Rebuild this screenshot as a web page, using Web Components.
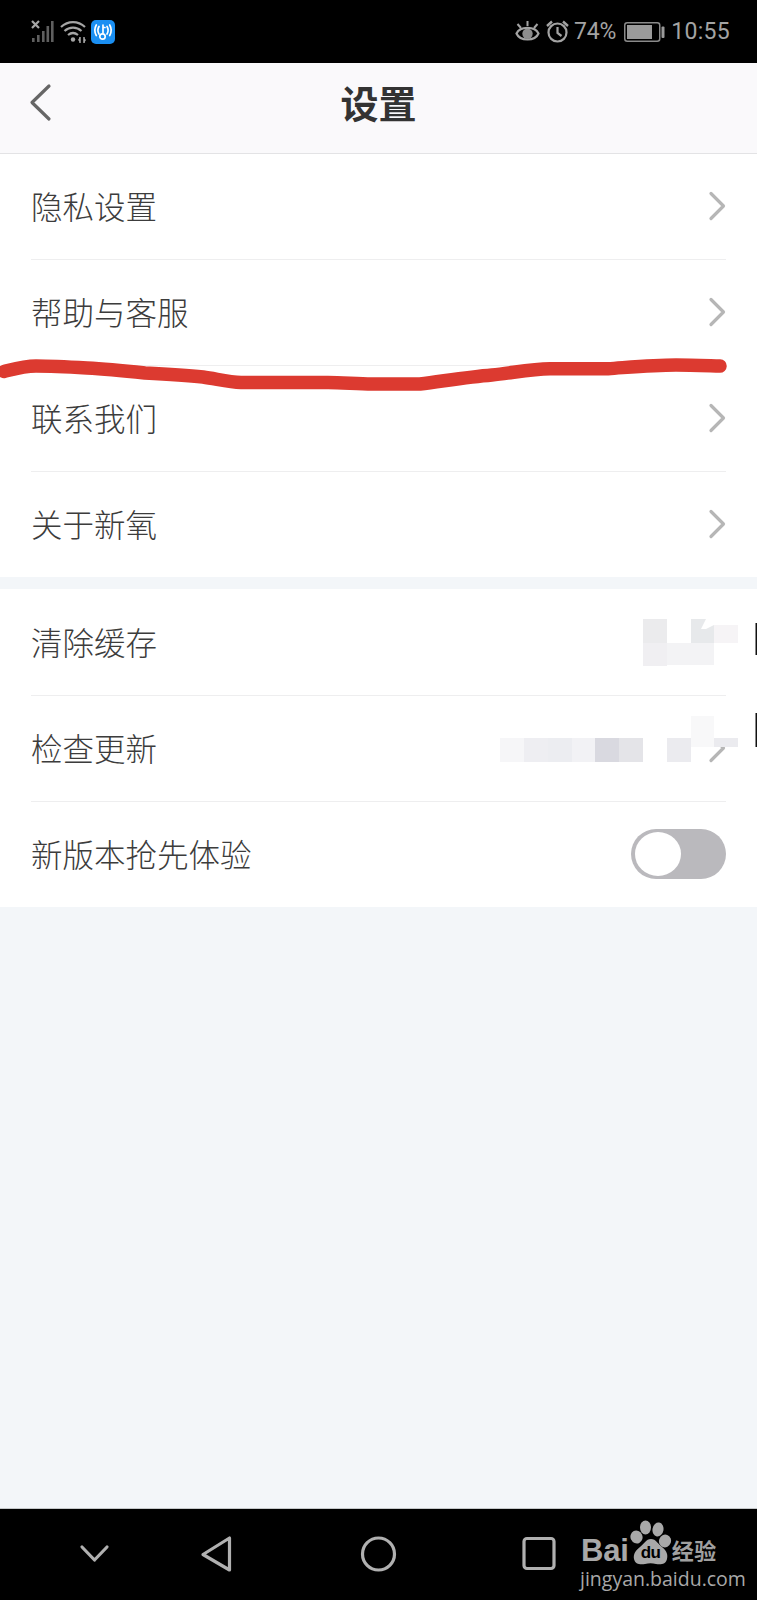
<!DOCTYPE html>
<html lang="zh-CN">
<head>
<meta charset="utf-8">
<title>设置</title>
<style>
  html, body { margin: 0; padding: 0; }
  body { width: 757px; height: 1600px; background: #f3f6f9; overflow: hidden; font-family: "Noto Sans CJK SC", "Noto Sans", sans-serif; }
  #page { position: relative; display: flex; flex-direction: column; width: 757px; height: 1600px; }
  #page > main-area { flex: 1; }
</style>
</head>
<body>
<div id="page">
  <status-bar></status-bar>
  <app-header>设置</app-header>
  <main-area>
    <settings-group>
      <settings-row label="隐私设置" chevron></settings-row>
      <settings-row label="帮助与客服" chevron></settings-row>
      <settings-row label="联系我们" chevron></settings-row>
      <settings-row label="关于新氧" chevron last></settings-row>
    </settings-group>
    <settings-group class="second">
      <settings-row label="清除缓存" tall></settings-row>
      <settings-row label="检查更新" chevron></settings-row>
      <settings-row label="新版本抢先体验" last><toggle-switch></toggle-switch></settings-row>
    </settings-group>
  </main-area>
  <nav-bar></nav-bar>
  <mosaic-overlay></mosaic-overlay>
  <red-scribble></red-scribble>
</div>
<script>
function def(name, css, html) {
  customElements.define(name, class extends HTMLElement {
    constructor() {
      super();
      const r = this.attachShadow({ mode: 'open' });
      r.innerHTML = '<style>' + css + '</style>' + (typeof html === 'function' ? html(this) : html);
    }
  });
}

def('status-bar', `
  :host { display: flex; justify-content: space-between; align-items: center; box-sizing: border-box; height: 63px; background: #000; padding: 0 27px 0 31px; color: #a3a3a3; font: 400 23px Roboto, sans-serif; flex: none; }
  .g { display: flex; align-items: center; }
  svg { display: block; }
  .pct { margin-left: 5px; letter-spacing: -.2px; }
  .time { margin-left: 6px; letter-spacing: .3px; }
  .bat { margin-left: 8px; }
  .alarm { margin-left: 6px; }
  .wifi { margin-left: 6px; }
  .app { margin-left: 5px; }
`, `
  <div class="g">
    <svg width="23" height="24" viewBox="0 0 23 24" fill="#5f5f5f">
      <path d="M1 1l7 7M8 1L1 8" stroke="#a5a5a5" stroke-width="2.2" fill="none"/>
      <rect x="1" y="18" width="2.6" height="4"/><rect x="6" y="15" width="2.6" height="7"/><rect x="11" y="11" width="2.6" height="11"/><rect x="15.5" y="6" width="2.6" height="16"/><rect x="20" y="1" width="2.6" height="21"/>
    </svg>
    <svg class="wifi" width="26" height="24" viewBox="0 0 26 24" fill="none" stroke="#a5a5a5" stroke-width="2.2">
      <path d="M1 7C8 .5 18 .5 25 7"/><path d="M4.5 11C9.5 6.5 16.5 6.5 21.500 11"/><path d="M8 15c3-2.400 7-2.400 10 0"/>
      <circle cx="13" cy="19.500" r="2.200" fill="#a5a5a5" stroke="none"/>
      <path d="M20 17v6M24 17v6" stroke-width="1.500"/><path d="M18 20l2-3v5zM26 20l-2 3v-5z" fill="#a5a5a5" stroke="none"/>
    </svg>
    <svg class="app" width="24" height="24" viewBox="0 0 24 24" fill="none">
      <rect width="24" height="24" rx="5" fill="#1a8ff2"/>
      <g stroke="#fff" stroke-width="1.700" stroke-linecap="round">
        <path d="M6.500 6.500c-1.500 2.500-1.500 5 0 7.500M3.800 5c-2 3.500-2 7 0 10.500" transform="translate(1.500 0)"/>
        <path d="M17.500 6.500c1.500 2.500 1.500 5 0 7.500M20.200 5c2 3.500 2 7 0 10.500" transform="translate(-1.500 0)"/>
        <path d="M12 5v8M12 7.500h2"/>
        <circle cx="11.500" cy="16.500" r="2.700"/>
      </g>
    </svg>
  </div>
  <div class="g">
    <svg width="25" height="23" viewBox="0 0 25 23" fill="none" stroke="#a3a3a3" stroke-width="2.200">
      <path d="M1.500 13.500C5 6 20 6 23.500 13.500 20 21.500 5 21.500 1.500 13.500z"/>
      <circle cx="12.500" cy="13.800" r="5.200" fill="#8d8d8d" stroke="none"/>
      <path d="M2.500 4l3.500 4M12.500 1v5M22.500 4L19 8" stroke-width="2"/>
    </svg>
    <svg class="alarm" width="23" height="23" viewBox="0 0 23 23" fill="none" stroke="#a3a3a3" stroke-width="2.200">
      <circle cx="11.500" cy="12.500" r="9"/>
      <path d="M11.500 7v6l4 3"/>
      <path d="M1 6l5-4.500M22 6l-5-4.500" stroke-width="2.400"/>
    </svg>
    <span class="pct">74%</span>
    <svg class="bat" width="41" height="20" viewBox="0 0 41 20">
      <rect x=".75" y=".75" width="35" height="18.500" rx="2.500" fill="none" stroke="#8a8a8a" stroke-width="1.500"/>
      <rect x="3" y="3" width="25" height="14" fill="#9a9a9a"/>
      <rect x="37.500" y="4.500" width="3" height="11.500" rx="1" fill="#9a9a9a"/>
    </svg>
    <span class="time">10:55</span>
  </div>
`);

def('app-header', `
  :host { display: flex; position: relative; align-items: center; justify-content: center; box-sizing: border-box; height: 91px; flex: none; background: #faf9fb; border-bottom: 1px solid #e3e3e5; color: #333; font: 700 38px "Noto Sans CJK SC", sans-serif; }
  svg { position: absolute; left: 28px; top: 20px; }
  span { position: relative; top: -7px; }
`, `<svg width="26" height="40" viewBox="0 0 26 40" fill="none" stroke="#666" stroke-width="3.200" stroke-linecap="round" stroke-linejoin="round"><path d="M21 3L4 19.500 21 36"/></svg><span><slot></slot></span>`);

def('main-area', `:host { display: block; }`, `<slot></slot>`);

def('settings-group', `
  :host { display: block; background: #fff; }
  :host(.second) { margin-top: 12px; }
`, `<slot></slot>`);

def('settings-row', `
  :host { display: block; padding: 0 31px 0 31px; color: #3c3c3c; font: 300 31.500px "Noto Sans CJK SC", sans-serif; }
  .in { display: flex; align-items: center; justify-content: space-between; box-sizing: border-box; height: 106px; border-bottom: 1px solid #eeeeef; }
  :host([last]) .in { height: 105px; border-bottom: 0; }
  :host([tall]) .in { height: 107px; }
  .label { position: relative; top: -2px; }
  :host([tall]) .label { top: -1px; }
  svg { display: block; position: relative; top: -1px; }
`, (el) => `
  <div class="in">
    <span class="label">${el.getAttribute('label')}</span>
    <slot></slot>
    ${el.hasAttribute('chevron') ? '<svg width="18" height="30" viewBox="0 0 18 30" fill="none" stroke="#b6b6b6" stroke-width="3.200" stroke-linecap="round" stroke-linejoin="round"><path d="M3 2.500L15.500 15 3 27.500"/></svg>' : ''}
  </div>`);

def('toggle-switch', `
  :host { display: block; box-sizing: border-box; width: 95px; height: 50px; margin-top: -2px; border-radius: 25px; background: #bab9bd; padding: 3px 4px; }
  i { display: block; width: 46px; height: 44px; border-radius: 50%; background: #fff; }
`, `<i></i>`);

def('nav-bar', `
  :host { display: block; position: relative; box-sizing: border-box; height: 92px; flex: none; background: #000; border-top: 1px solid #c4c7c9; }
  svg.icons { position: absolute; left: 0; top: -1px; }
  baidu-mark { position: absolute; left: 580px; top: 10px; }
`, `
  <svg class="icons" width="600" height="92" viewBox="0 0 600 92" fill="none" stroke="#b0b0b0" stroke-width="3.200" stroke-linecap="round" stroke-linejoin="round">
    <path d="M82 39l12.500 13L107 39"/>
    <path d="M229.500 30v32L203 46.500z"/>
    <circle cx="378.500" cy="46" r="16"/>
    <rect x="524" y="30.500" width="30" height="30" rx="3"/>
  </svg>
  <baidu-mark></baidu-mark>
`);

def('baidu-mark', `
  :host { display: block; width: 140px; color: #a8a8a8; }
  .top { display: flex; align-items: flex-end; height: 46px; }
  .bai { font: 700 31px/26px "Liberation Sans", sans-serif; letter-spacing: -.2px; position: relative; top: -1px; margin-left: 1px; }
  .paw { position: relative; width: 42px; height: 46px; margin-left: 1px; flex: none; top: 1px; }
  .paw svg { display: block; }
  .du { position: absolute; left: 11px; top: 23px; color: #000; font: 700 17px/20px "Liberation Sans", sans-serif; letter-spacing: -.5px; }
  .jy { font: 700 22px/25px "Noto Sans CJK SC", sans-serif; margin-left: 0; letter-spacing: .5px; color: #a0a0a0; position: relative; top: -3px; }
  .url { font: 400 19.500px/22px "Open Sans", sans-serif; margin-top: 3px; white-space: nowrap; }
`, `
  <div class="top">
    <span class="bai">Bai</span>
    <span class="paw">
      <svg width="42" height="46" viewBox="0 0 42 46" fill="#a8a8a8">
        <ellipse cx="15.500" cy="7.500" rx="5.500" ry="7"/>
        <ellipse cx="28" cy="9.500" rx="5.500" ry="7" transform="rotate(10 28 9.500)"/>
        <ellipse cx="6.500" cy="17" rx="6" ry="6.500" transform="rotate(-25 6.500 17)"/>
        <ellipse cx="35" cy="21" rx="6" ry="6.500" transform="rotate(20 35 21)"/>
        <path d="M21 19c5 0 7 5 11 8 5 4 6 8 5 12-1 5-6 6-11 5-4-1-7-1-11 0-5 1-10 0-11-5-1-5 2-9 6-12 4-3 6-8 11-8z"/>
      </svg>
      <span class="du">du</span>
    </span>
    <span class="jy">经验</span>
  </div>
  <div class="url">jingyan.baidu.com</div>
`);

const cells = [
  [643,619,24,24,'#ebebed'],[643,643,24,23,'#f0eff2'],[667,643,47,22,'#f3f3f5'],
  [691,619,23,24,'#e7e9eb'],[714,625,24,18,'#f6f4f6'],
  [691,716,47,31,'#ffffff'],
  [500,738,24,24,'#f6f6f8'],[524,738,24,24,'#eeeef2'],[548,738,24,24,'#ecedf1'],[572,738,23,24,'#f2f2f5'],
  [595,738,24,24,'#d9d9e0'],[619,738,24,24,'#e4e4e8'],[667,738,24,24,'#ebebef'],
  [691,716,23,31,'#f8f8f9'],[714,738,24,9,'#ebebef']
].map(c => `<rect x="${c[0]}" y="${c[1]}" width="${c[2]}" height="${c[3]}" fill="${c[4]}"/>`).join('');

def('mosaic-overlay', `
  :host { display: block; position: absolute; left: 0; top: 0; width: 757px; height: 1600px; pointer-events: none; }
  svg { display: block; }
`, `<svg width="757" height="1600" viewBox="0 0 757 1600">
  ${cells}
  <path d="M706 619h8v6l-8 4-5 0z" fill="#fff"/>
  <rect x="755.500" y="623" width="1.500" height="32" fill="#111"/>
  <rect x="755.500" y="713" width="1.500" height="34" fill="#111"/>
</svg>`);

def('red-scribble', `
  :host { display: block; position: absolute; left: 0; top: 0; width: 757px; height: 420px; pointer-events: none; }
  svg { display: block; }
`, `<svg width="757" height="420" viewBox="0 0 757 420" fill="none">
  <path d="M4 371.500C14 369 24 366 36 366c17 0 34 1 51 2 19 1 39 3 58 5 20 1 39 2 58 4 14 2 26 5 38 5.500h87c15 0 29 1.500 44 1.500h48c24-3 48-7 72-9 20-2 39-6 58-6.300h58c22-1.500 45-3.700 68-3.700 15 0 30 .6 44 1" stroke="#dc3a30" stroke-width="13.500" stroke-linecap="round" stroke-linejoin="round"/>
</svg>`);
</script>
</body>
</html>
